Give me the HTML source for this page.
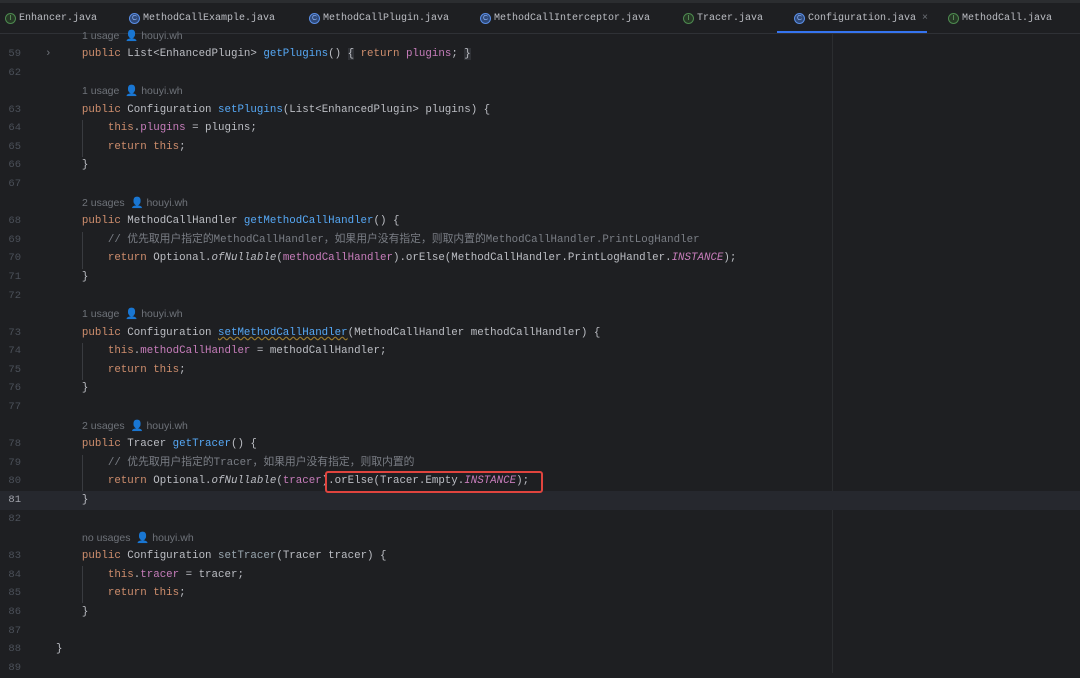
<!DOCTYPE html>
<html><head><meta charset="utf-8"><style>
*{margin:0;padding:0;box-sizing:border-box}
body{width:1080px;height:673px;background:#1e1f22;overflow:hidden;position:relative;font-family:"Liberation Mono","Noto Sans CJK SC",monospace;}
.tabs{position:absolute;left:0;top:0;width:1080px;height:34px;background:#1e1f22;border-bottom:1px solid #2f3136;border-top:3px solid #2b2d30}
.tab{position:absolute;top:12px;font-size:10px;color:#bcbec4;white-space:nowrap;line-height:14px}
.ic{position:absolute;top:13px;width:11px;height:11px;border-radius:50%;font-family:"Liberation Sans",sans-serif;font-size:7px;line-height:9px;text-align:center}
.ic.c{border:1px solid #5a8ee6;color:#8fb3f5;background:#2f4a7a}
.ic.i{border:1px solid #4d8a4f;color:#6fb06f;background:#263826}
.under{position:absolute;left:777px;top:31px;width:150px;height:2px;background:#3574f0}
.row{position:absolute;left:0;width:1080px;height:19px;line-height:19px;font-size:10.8px;color:#bcbec4;white-space:pre}
.ln{position:absolute;left:0;width:21px;text-align:right;color:#4b5059;font-size:10.5px}
.code{position:absolute;left:56px}
.us{position:absolute;left:82px;font-family:"Liberation Sans",sans-serif;font-size:10.5px;color:#6f737a}
.k{color:#cf8e6d}.f{color:#56a8f5}.p{color:#c77dbb}.cm{color:#7a7e85}.it{font-style:italic}
.cur{background:#26282e}
.guide{position:absolute;width:1px;background:#393b40}
</style></head><body>
<div class="tabs"></div>
<div class="ic i" style="left:5px">I</div><div class="tab" style="left:19px">Enhancer.java</div>
<div class="ic c" style="left:129px">C</div><div class="tab" style="left:143px">MethodCallExample.java</div>
<div class="ic c" style="left:309px">C</div><div class="tab" style="left:323px">MethodCallPlugin.java</div>
<div class="ic c" style="left:480px">C</div><div class="tab" style="left:494px">MethodCallInterceptor.java</div>
<div class="ic i" style="left:683px">I</div><div class="tab" style="left:697px">Tracer.java</div>
<div class="ic c" style="left:794px">C</div><div class="tab" style="left:808px">Configuration.java <span style="color:#6f737a">×</span></div>
<div class="ic i" style="left:948px">I</div><div class="tab" style="left:962px">MethodCall.java</div>
<div class="under"></div>
<div style="position:absolute;left:832px;top:34px;width:1px;height:639px;background:#2b2d30"></div>
<div class="guide" style="left:82px;top:120px;height:37px"></div>
<div class="guide" style="left:82px;top:232px;height:37px"></div>
<div class="guide" style="left:82px;top:343px;height:37px"></div>
<div class="guide" style="left:82px;top:455px;height:37px"></div>
<div class="guide" style="left:82px;top:566px;height:37px"></div>

<div class="row" style="top:27px"><span class="us">1 usage &nbsp;👤 houyi.wh</span></div>
<div class="row" style="top:45px"><span class="ln">59</span><span style="position:absolute;left:45px;color:#6f737a">›</span><span class="code">    <span class="k">public</span> List&lt;EnhancedPlugin&gt; <span class="f">getPlugins</span>() <span style="background:#2f3136">{</span> <span class="k">return</span> <span class="p">plugins</span>; <span style="background:#2f3136">}</span></span></div>
<div class="row" style="top:64px"><span class="ln">62</span></div>
<div class="row" style="top:82px"><span class="us">1 usage &nbsp;👤 houyi.wh</span></div>
<div class="row" style="top:101px"><span class="ln">63</span><span class="code">    <span class="k">public</span> Configuration <span class="f">setPlugins</span>(List&lt;EnhancedPlugin&gt; plugins) {</span></div>
<div class="row" style="top:119px"><span class="ln">64</span><span class="code">        <span class="k">this</span>.<span class="p">plugins</span> = plugins;</span></div>
<div class="row" style="top:138px"><span class="ln">65</span><span class="code">        <span class="k">return this</span>;</span></div>
<div class="row" style="top:156px"><span class="ln">66</span><span class="code">    }</span></div>
<div class="row" style="top:175px"><span class="ln">67</span></div>
<div class="row" style="top:194px"><span class="us">2 usages &nbsp;👤 houyi.wh</span></div>
<div class="row" style="top:212px"><span class="ln">68</span><span class="code">    <span class="k">public</span> MethodCallHandler <span class="f">getMethodCallHandler</span>() {</span></div>
<div class="row" style="top:231px"><span class="ln">69</span><span class="code">        <span class="cm">// 优先取用户指定的MethodCallHandler，如果用户没有指定，则取内置的MethodCallHandler.PrintLogHandler</span></span></div>
<div class="row" style="top:249px"><span class="ln">70</span><span class="code">        <span class="k">return</span> Optional.<span class="it">ofNullable</span>(<span class="p">methodCallHandler</span>).orElse(MethodCallHandler.PrintLogHandler.<span class="p it">INSTANCE</span>);</span></div>
<div class="row" style="top:268px"><span class="ln">71</span><span class="code">    }</span></div>
<div class="row" style="top:287px"><span class="ln">72</span></div>
<div class="row" style="top:305px"><span class="us">1 usage &nbsp;👤 houyi.wh</span></div>
<div class="row" style="top:324px"><span class="ln">73</span><span class="code">    <span class="k">public</span> Configuration <span class="f" style="text-decoration:underline wavy #9a7b2e">setMethodCallHandler</span>(MethodCallHandler methodCallHandler) {</span></div>
<div class="row" style="top:342px"><span class="ln">74</span><span class="code">        <span class="k">this</span>.<span class="p">methodCallHandler</span> = methodCallHandler;</span></div>
<div class="row" style="top:361px"><span class="ln">75</span><span class="code">        <span class="k">return this</span>;</span></div>
<div class="row" style="top:379px"><span class="ln">76</span><span class="code">    }</span></div>
<div class="row" style="top:398px"><span class="ln">77</span></div>
<div class="row" style="top:417px"><span class="us">2 usages &nbsp;👤 houyi.wh</span></div>
<div class="row" style="top:435px"><span class="ln">78</span><span class="code">    <span class="k">public</span> Tracer <span class="f">getTracer</span>() {</span></div>
<div class="row" style="top:454px"><span class="ln">79</span><span class="code">        <span class="cm">// 优先取用户指定的Tracer，如果用户没有指定，则取内置的</span></span></div>
<div class="row" style="top:472px"><span class="ln">80</span><span class="code">        <span class="k">return</span> Optional.<span class="it">ofNullable</span>(<span class="p">tracer</span>).orElse(Tracer.Empty.<span class="p it">INSTANCE</span>);</span></div>
<div class="row cur" style="top:491px"><span class="ln" style="color:#a1a3ab">81</span><span class="code">    }</span></div>
<div class="row" style="top:510px"><span class="ln">82</span></div>
<div class="row" style="top:529px"><span class="us">no usages &nbsp;👤 houyi.wh</span></div>
<div class="row" style="top:547px"><span class="ln">83</span><span class="code">    <span class="k">public</span> Configuration <span style="color:#9aa7b0">setTracer</span>(Tracer tracer) {</span></div>
<div class="row" style="top:566px"><span class="ln">84</span><span class="code">        <span class="k">this</span>.<span class="p">tracer</span> = tracer;</span></div>
<div class="row" style="top:584px"><span class="ln">85</span><span class="code">        <span class="k">return this</span>;</span></div>
<div class="row" style="top:603px"><span class="ln">86</span><span class="code">    }</span></div>
<div class="row" style="top:622px"><span class="ln">87</span></div>
<div class="row" style="top:640px"><span class="ln">88</span><span class="code">}</span></div>
<div class="row" style="top:659px"><span class="ln">89</span></div>
<div style="position:absolute;left:325px;top:471px;width:218px;height:22px;border:2px solid #e0443e;border-radius:3px"></div>
</body></html>
